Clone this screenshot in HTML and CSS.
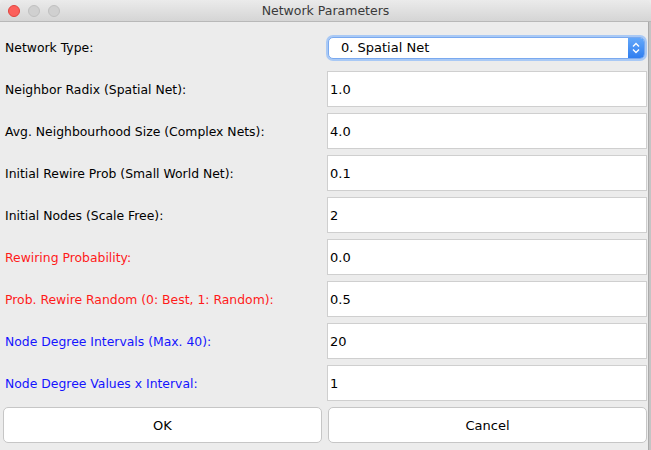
FILE: index.html
```html
<!DOCTYPE html>
<html>
<head>
<meta charset="utf-8">
<link rel="stylesheet" href="styles.css">
</head>
<body>
<div class="window">
  <div class="titlebar">
    <div class="lights">
      <span class="light red"></span>
      <span class="light gray"></span>
      <span class="light gray"></span>
    </div>
    <div class="title">Network Parameters</div>
  </div>
  <div class="content">
    <div class="form">
      <label class="lbl">Network Type:</label>
      <div class="select-cell">
        <div class="select">
          <span class="select-text">0. Spatial Net</span>
          <span class="stepper">
            <svg width="10" height="14" viewBox="0 0 10 14"><path d="M2 5.5 L5 2.5 L8 5.5 M2 8.5 L5 11.5 L8 8.5" fill="none" stroke="#fff" stroke-width="1.4"/></svg>
          </span>
        </div>
      </div>

      <label class="lbl">Neighbor Radix (Spatial Net):</label>
      <div class="field">1.0</div>

      <label class="lbl">Avg. Neighbourhood Size (Complex Nets):</label>
      <div class="field">4.0</div>

      <label class="lbl">Initial Rewire Prob (Small World Net):</label>
      <div class="field">0.1</div>

      <label class="lbl">Initial Nodes (Scale Free):</label>
      <div class="field">2</div>

      <label class="lbl red-t">Rewiring Probability:</label>
      <div class="field">0.0</div>

      <label class="lbl red-t">Prob. Rewire Random (0: Best, 1: Random):</label>
      <div class="field">0.5</div>

      <label class="lbl blue-t">Node Degree Intervals (Max. 40):</label>
      <div class="field">20</div>

      <label class="lbl blue-t">Node Degree Values x Interval:</label>
      <div class="field">1</div>
    </div>
    <div class="buttons">
      <div class="btn">OK</div>
      <div class="btn">Cancel</div>
    </div>
  </div>
  <div class="edge"></div>
</div>
</body>
</html>
```
FILE: styles.css
```css
html, body {
  margin: 0;
  padding: 0;
  background: #ececec;
}
body {
  width: 651px;
  height: 450px;
  overflow: hidden;
  font-family: "DejaVu Sans", "Liberation Sans", sans-serif;
}
.window {
  position: relative;
  width: 651px;
  height: 450px;
  background: #ececec;
}
.titlebar {
  height: 21px;
  border-bottom: 1px solid #b8b8b8;
  background: linear-gradient(#ebebeb, #d5d5d5);
  display: flex;
  align-items: center;
  position: relative;
  border-top-left-radius: 5px;
  border-top-right-radius: 5px;
}
.lights {
  display: flex;
  gap: 8px;
  padding-left: 8px;
}
.light {
  width: 12px;
  height: 12px;
  border-radius: 50%;
  box-sizing: border-box;
}
.light.red {
  background: #fc605b;
  border: 1px solid #e0443e;
}
.light.gray {
  background: #d0d0d0;
  border: 1px solid #c0c0c0;
}
.title {
  position: absolute;
  left: 0;
  right: 0;
  text-align: center;
  font-size: 12.5px;
  color: #3a3a3a;
  top: 3px;
}
.content {
  padding: 7px 4px 0 3px;
}
.form {
  display: grid;
  grid-template-columns: 1fr 320px;
  column-gap: 5px;
  row-gap: 6px;
  grid-auto-rows: 36px;
}
.lbl {
  display: flex;
  align-items: center;
  padding-left: 2px;
  font-size: 12.4px;
  color: #000;
  white-space: nowrap;
}
.red-t { color: #ff1a1a; }
.blue-t { color: #1414ff; }
.field {
  box-sizing: border-box;
  border: 1px solid #cfcfcf;
  background: #fff;
  display: flex;
  align-items: center;
  padding-left: 2px;
  font-size: 13px;
  color: #000;
}
.select-cell {
  display: flex;
  align-items: center;
}
.select {
  box-sizing: border-box;
  margin-left: 1px;
  width: 317px;
  height: 22px;
  border-radius: 5px;
  border: 1px solid #7aa9ef;
  box-shadow: 0 0 0 2px #a9c9f5;
  background: #fff;
  display: flex;
  align-items: center;
  justify-content: space-between;
  overflow: hidden;
  margin-top: 1px;
}
.select-text {
  padding-left: 12px;
  font-size: 13px;
  color: #000;
}
.stepper {
  width: 16px;
  height: 100%;
  background: linear-gradient(#64a8fa, #2f7ef0);
  display: flex;
  align-items: center;
  justify-content: center;
}
.buttons {
  display: grid;
  grid-template-columns: 1fr 1fr;
  column-gap: 6px;
  margin-top: 6px;
}
.btn {
  box-sizing: border-box;
  height: 36px;
  border: 1px solid #c6c6c6;
  border-radius: 5px;
  background: #fff;
  display: flex;
  align-items: center;
  justify-content: center;
  font-size: 13px;
  color: #000;
}
.edge {
  position: absolute;
  right: 0;
  top: 22px;
  bottom: 0;
  width: 2px;
  background: #c4c4c4;
  border-left: 1px solid #aaaaaa;
}
```
